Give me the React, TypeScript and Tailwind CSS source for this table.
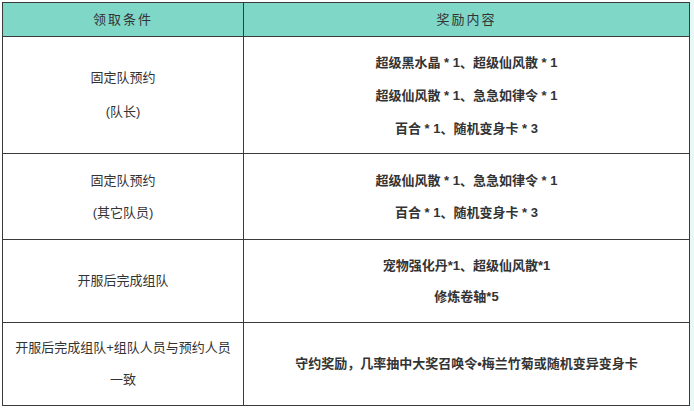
import React from "react";

const font = { fontFamily: '"Liberation Sans", "Noto Sans CJK SC", sans-serif' };

function Lines({ lines, bold, leading }: { lines: React.ReactNode[]; bold?: boolean; leading: string }) {
  return (
    <div className={`flex flex-col items-center ${leading} ${bold ? "font-bold" : "font-normal"}`}>
      {lines.map((l, i) => (
        <div key={i}>{l}</div>
      ))}
    </div>
  );
}

export default function App() {
  const rows = [
    {
      h: "h-[117px]",
      left: ["固定队预约", "(队长)"],
      leftLeading: "leading-[34px]",
      right: ["超级黑水晶 * 1、超级仙风散 * 1", "超级仙风散 * 1、急急如律令 * 1", "百合 * 1、随机变身卡 * 3"],
      rightLeading: "leading-[33px]",
    },
    {
      h: "h-[86px]",
      left: ["固定队预约", "(其它队员)"],
      leftLeading: "leading-[32px]",
      right: ["超级仙风散 * 1、急急如律令 * 1", "百合 * 1、随机变身卡 * 3"],
      rightLeading: "leading-[32px]",
    },
    {
      h: "h-[83px]",
      left: ["开服后完成组队"],
      leftLeading: "leading-[32px]",
      right: ["宠物强化丹*1、超级仙风散*1", "修炼卷轴*5"],
      rightLeading: "leading-[31px]",
    },
    {
      h: "h-[83px]",
      left: ["开服后完成组队+组队人员与预约人员", "一致"],
      leftLeading: "leading-[32px]",
      right: [
        <span key="a">
          守约奖励，几率抽中大奖召唤令<span className="font-bold">•</span>梅兰竹菊或随机变异变身卡
        </span>,
      ],
      rightLeading: "leading-[32px]",
    },
  ];

  return (
    <div className="w-[694px] h-[411px] flex bg-white text-[13px] text-[#333]" style={font}>
      <div className="w-[690px] pl-[2px] pt-[2px]">
        <table className="w-[688px] border-collapse table-fixed">
          <colgroup>
            <col className="w-[241px]" />
            <col />
          </colgroup>
          <thead>
            <tr className="h-[34px] bg-[#7fd8c7]">
              <th className="border border-[#3a3a3a] font-normal tracking-[2px] text-center p-0">领取条件</th>
              <th className="border border-[#3a3a3a] font-normal tracking-[2px] text-center p-0">奖励内容</th>
            </tr>
          </thead>
          <tbody>
            {rows.map((r, i) => (
              <tr key={i} className={r.h}>
                <td className="border border-[#3a3a3a] text-center px-[8px] py-0 align-middle">
                  <Lines lines={r.left} leading={r.leftLeading} />
                </td>
                <td className="border border-[#3a3a3a] text-center px-[8px] py-0 align-middle">
                  <Lines lines={r.right} bold leading={r.rightLeading} />
                </td>
              </tr>
            ))}
          </tbody>
        </table>
      </div>
      <div className="flex-1 bg-[#e8f8f5]" />
    </div>
  );
}
